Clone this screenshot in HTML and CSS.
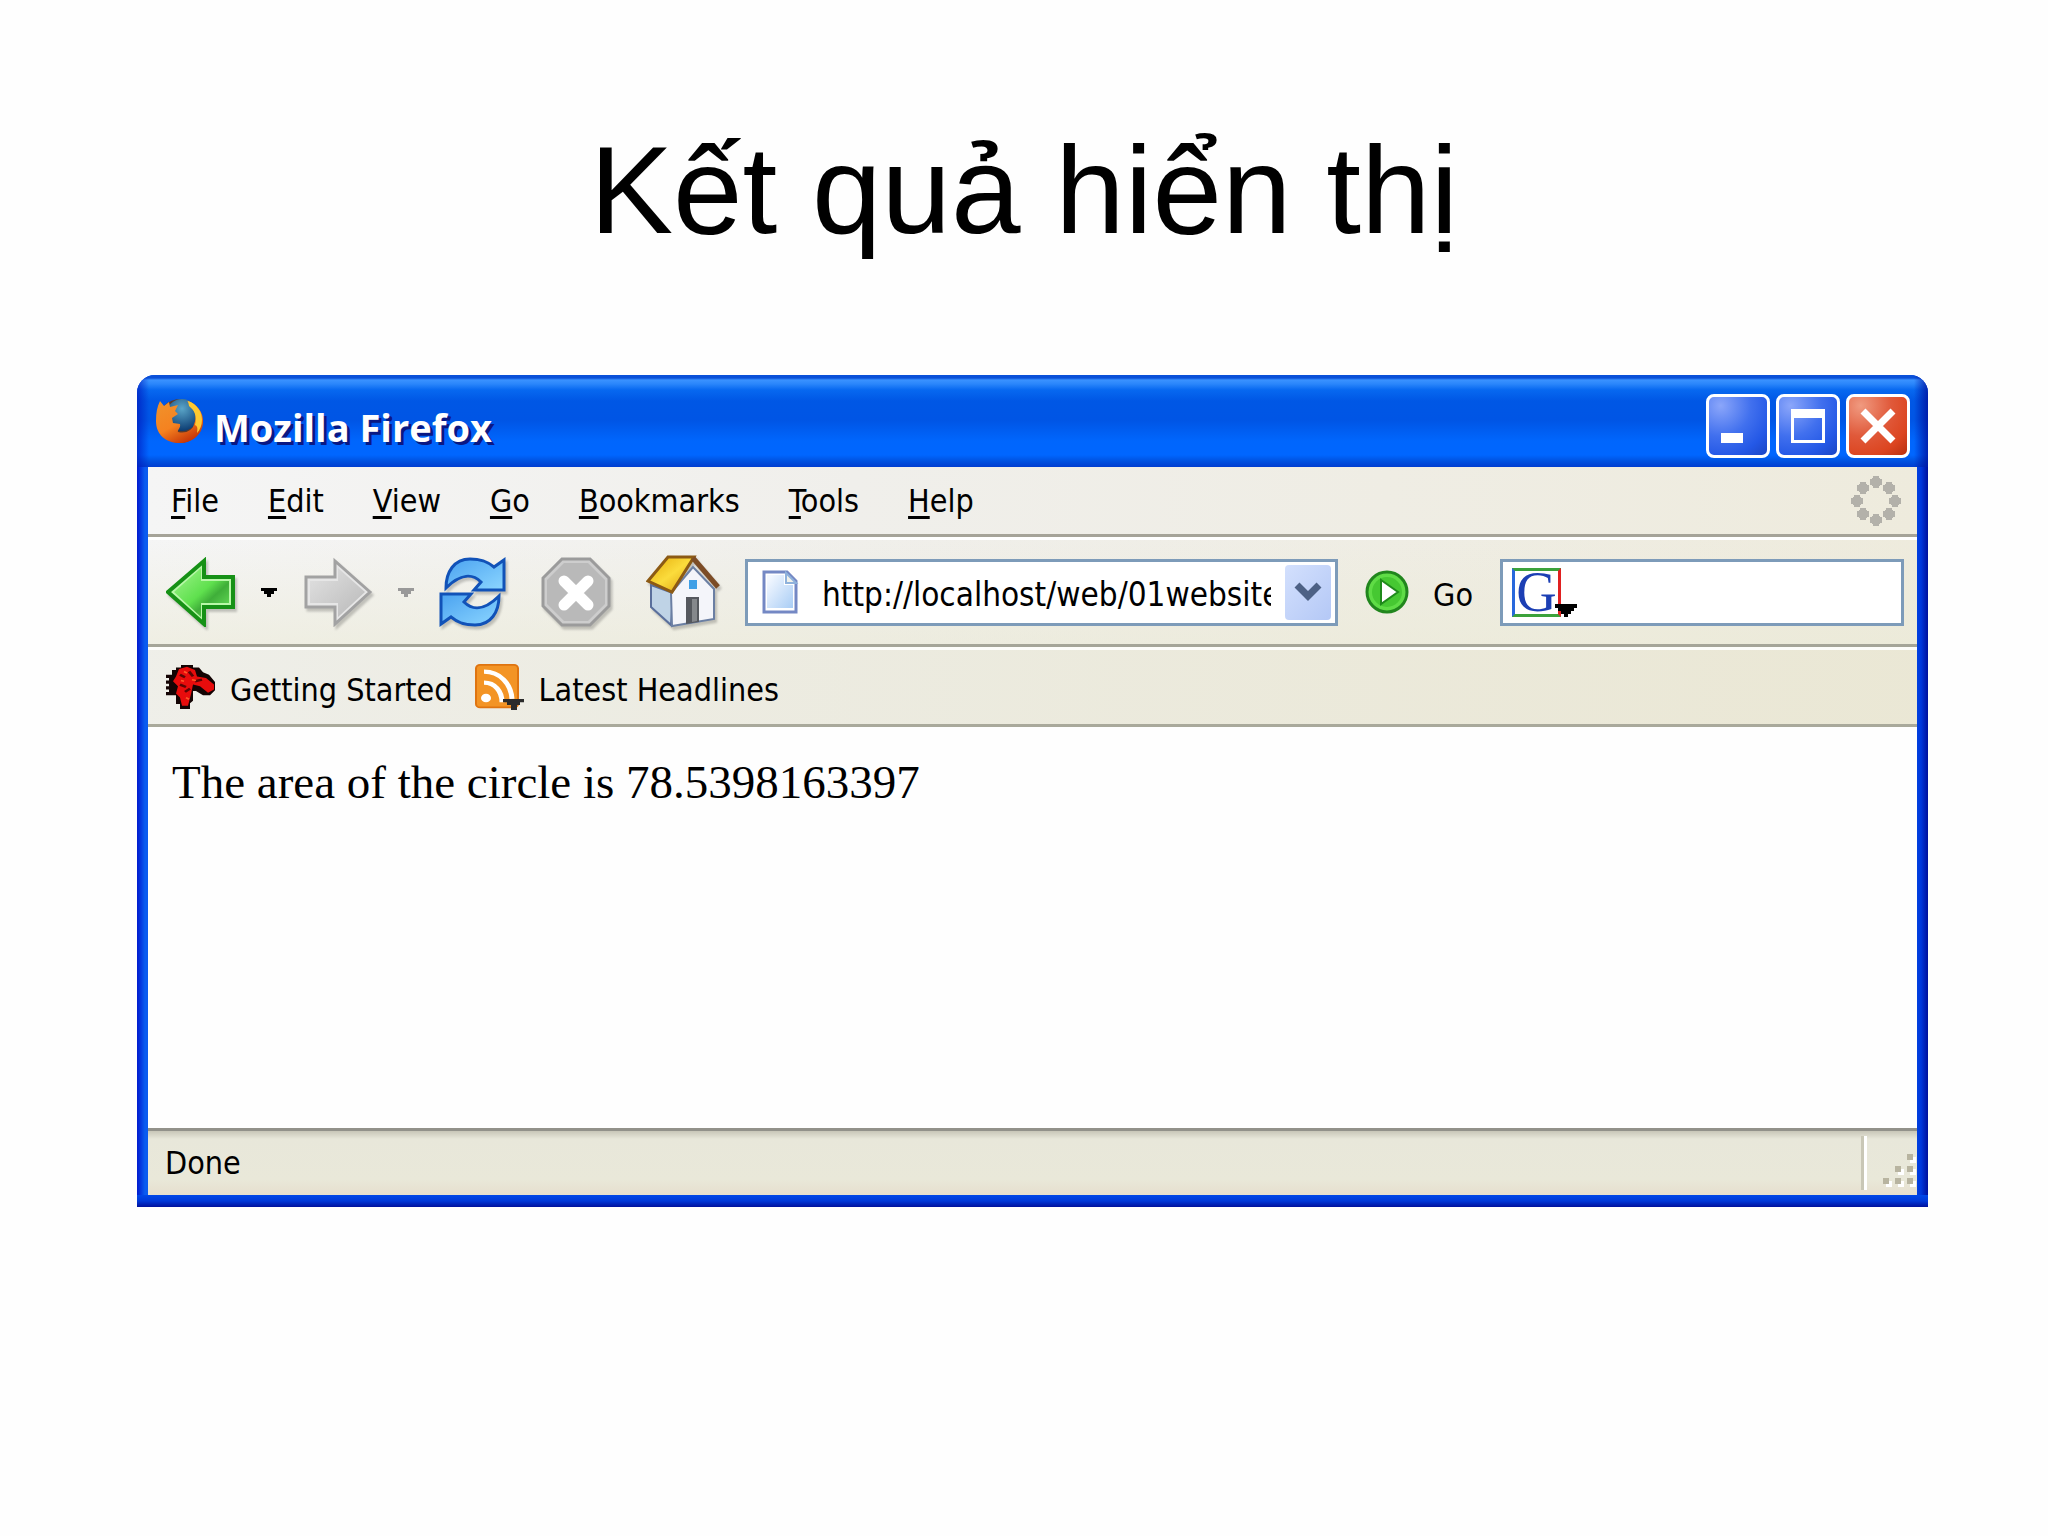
FILE: index.html
```html
<!DOCTYPE html>
<html lang="vi">
<head>
    <meta charset="UTF-8">
    <meta name="viewport" content="width=device-width, initial-scale=1.0">
    <title>Kết quả hiển thị</title>
    <link rel="stylesheet" href="styles.css">
</head>
<body>
    <h1>Kết quả hiển thị</h1>

    <div class="window">
        <div class="title-bar">
            <svg class="logo" width="49" height="46" viewBox="0 0 49 46">
                <defs>
                    <linearGradient id="fox" x1="0" y1="0" x2="0.6" y2="1">
                        <stop offset="0" stop-color="#f0932c"/>
                        <stop offset="0.6" stop-color="#f58220"/>
                        <stop offset="1" stop-color="#c83808"/>
                    </linearGradient>
                    <radialGradient id="globe" cx="0.5" cy="0.3" r="0.7">
                        <stop offset="0" stop-color="#5aa5c8"/>
                        <stop offset="1" stop-color="#0c3c72"/>
                    </radialGradient>
                </defs>
                <circle cx="25" cy="23" r="22" fill="#5b3a2a"/>
                <circle cx="27" cy="17" r="16" fill="url(#globe)"/>
                <path d="M5 3l4 5 5-4 1 5 8-2-3 6 3 3-6 4 1 5 7 1c1 4-3 6-2 8 8 2 15-2 16-8 3-6 1-13-2-17l-5-6c9 2 17 11 16 22-1 12-11 20-23 20C11 45 1 37 1 23 1 15 2 9 5 3z" fill="url(#fox)"/>
                <path d="M33 3c9 3 14 11 14 19 0 5-2 10-5 13 1-6 0-7-2-8 2-9 0-14-6-19z" fill="#ffc930"/>
            </svg>
            <span class="title">Mozilla Firefox</span>
            <button class="win-button" aria-label="Minimize">
                <svg width="58" height="58" viewBox="0 0 58 58"><path d="M12 36h22v10H12z" fill="#fff"/></svg>
            </button>
            <button class="win-button" aria-label="Maximize">
                <svg width="58" height="58" viewBox="0 0 58 58"><path d="M12 12h34v34H12zM15 21v22h28V21z" fill="#fff" fill-rule="evenodd"/></svg>
            </button>
            <button class="win-button close" aria-label="Close">
                <svg width="58" height="58" viewBox="0 0 58 58"><path d="M14 14l30 30M44 14L14 44" stroke="#fff" stroke-width="7"/></svg>
            </button>
        </div>

        <div class="frame">
            <nav class="menu-bar">
                <a href="#"><u>F</u>ile</a>
                <a href="#"><u>E</u>dit</a>
                <a href="#"><u>V</u>iew</a>
                <a href="#"><u>G</u>o</a>
                <a href="#"><u>B</u>ookmarks</a>
                <a href="#"><u>T</u>ools</a>
                <a href="#"><u>H</u>elp</a>
                <svg class="throbber" width="50" height="50" viewBox="0 0 50 50">
                    <path d="M25 0v12M19 6h12M38 6v12M32 12h12M44 19v12M38 25h12M38 32v12M32 38h12M25 38v12M19 44h12M12 32v12M6 38h12M6 19v12M0 25h12M12 6v12M6 12h12" stroke="#b3b1aa" stroke-width="6"/>
                    <path d="M21 2h8v8h-8zM34 8h8v8h-8zM40 21h8v8h-8zM34 34h8v8h-8zM21 40h8v8h-8zM8 34h8v8H8zM2 21h8v8H2zM8 8h8v8H8z" fill="#b3b1aa"/>
                </svg>
            </nav>

            <div class="toolbar">
                <button class="tool" aria-label="Back">
                    <svg width="70" height="70" viewBox="0 0 70 70">
                        <defs>
                            <linearGradient id="green" x1="0" y1="0" x2="1" y2="1">
                                <stop offset="0" stop-color="#a0f58c"/>
                                <stop offset="0.5" stop-color="#5fe04e"/>
                                <stop offset="0.65" stop-color="#3fae39"/>
                                <stop offset="1" stop-color="#6fe860"/>
                            </linearGradient>
                        </defs>
                        <path d="M2 35L38 4v16h29v30H38v17z" fill="#b8f8a8" stroke="#169116" stroke-width="4"/>
                        <path d="M8 35l27-24v13h28v22H35v14z" fill="url(#green)"/>
                    </svg>
                </button>
                <button class="drop" aria-label="Back history">
                    <svg width="16" height="9" viewBox="0 0 16 9"><path d="M0 0h16v3h-3v3h-3v3H6V6H3V3H0z" fill="#000"/></svg>
                </button>
                <button class="tool" aria-label="Forward">
                    <svg width="70" height="70" viewBox="0 0 70 70">
                        <defs>
                            <linearGradient id="grey" x1="0" y1="0" x2="1" y2="1">
                                <stop offset="0" stop-color="#e2e2e2"/>
                                <stop offset="1" stop-color="#b9b9b9"/>
                            </linearGradient>
                        </defs>
                        <path d="M67 35L32 4v16H3v30h29v17z" fill="#e6e6e6" stroke="#a2a2a2" stroke-width="3"/>
                        <path d="M62 35L35 11v13H7v22h28v14z" fill="url(#grey)"/>
                    </svg>
                </button>
                <button class="drop" aria-label="Forward history">
                    <svg width="16" height="9" viewBox="0 0 16 9"><path d="M0 0h16v3h-3v3h-3v3H6V6H3V3H0z" fill="#999"/></svg>
                </button>
                <button class="tool reload" aria-label="Reload">
                    <svg width="70" height="70" viewBox="0 0 70 70">
                        <defs>
                            <linearGradient id="blue" x1="0" y1="0" x2="1" y2="1">
                                <stop offset="0" stop-color="#4aa2f0"/>
                                <stop offset="1" stop-color="#8cd6ff"/>
                            </linearGradient>
                        </defs>
                        <path d="M8 31C8 15 16 2 32 2c12 0 18 3 24 8l10-7v30H36l7-8c-8-8-20-9-35 6z" fill="url(#blue)" stroke="#1152b8" stroke-width="3"/>
                        <path d="M61 39c0 16-8 29-24 29-12 0-18-3-24-8L3 67V37h30l-7 8c8 8 20 9 35-6z" fill="url(#blue)" stroke="#1152b8" stroke-width="3"/>
                    </svg>
                </button>
                <button class="tool stop" aria-label="Stop">
                    <svg width="70" height="70" viewBox="0 0 70 70">
                        <path d="M21 2h28l19 19v28L49 68H21L2 49V21z" fill="#cdcdcd" stroke="#9b9b9b" stroke-width="3"/>
                        <path d="M23 6h24l17 17v24L47 64H23L6 47V23z" fill="#b9b9b9"/>
                        <path d="M23 24l24 24M47 24L23 48" stroke="#fff" stroke-width="11" stroke-linecap="round"/>
                    </svg>
                </button>
                <button class="tool home" aria-label="Home">
                    <svg width="74" height="74" viewBox="0 0 74 74">
                        <defs>
                            <linearGradient id="roof" x1="0" y1="0" x2="1" y2="1">
                                <stop offset="0" stop-color="#e3a908"/>
                                <stop offset="0.5" stop-color="#fbdc3c"/>
                                <stop offset="1" stop-color="#d99a0a"/>
                            </linearGradient>
                        </defs>
                        <path d="M5 30v22l20 18 2-32z" fill="#bfd3e6" stroke="#5a6f9c" stroke-width="2"/>
                        <path d="M25 38L47 12l21 22v30l-42 7z" fill="#f4f5fa" stroke="#6b7fa3" stroke-width="2"/>
                        <path d="M2 26L22 2h26L26 37z" fill="url(#roof)" stroke="#8c5a14" stroke-width="3"/>
                        <path d="M47 3l25 29" stroke="#7c4c26" stroke-width="5"/>
                        <path d="M43 25h8v9h-8z" fill="#3f9fe6"/>
                        <path d="M40 42h13v25l-13 2z" fill="#55585e"/>
                        <path d="M46 44h5v22l-5 1z" fill="#85888c"/>
                    </svg>
                </button>
                <div class="field address">
                    <svg width="37" height="45" viewBox="0 0 37 45">
                        <defs>
                            <linearGradient id="sheet" x1="0" y1="0" x2="1" y2="1">
                                <stop offset="0.1" stop-color="#f2f7ff"/>
                                <stop offset="1" stop-color="#a9cdf5"/>
                            </linearGradient>
                        </defs>
                        <path d="M2 2h23l9 9v31H2z" fill="#fff" stroke="#7488c4" stroke-width="3"/>
                        <path d="M5 5h17v10h9v23H5z" fill="url(#sheet)"/>
                        <path d="M24 3v10h10z" fill="#f2f2ea" stroke="#8fb2dc" stroke-width="2"/>
                    </svg>
                    <input type="text" aria-label="Address" value="http://localhost/web/01website/">
                    <button class="address-drop" aria-label="Show addresses">
                        <svg width="28" height="20" viewBox="0 0 28 20"><path d="M3 3l11 11L25 3" fill="none" stroke="#4d6185" stroke-width="7"/></svg>
                    </button>
                </div>
                <button class="go">
                    <svg width="44" height="44" viewBox="0 0 44 44">
                        <circle cx="22" cy="22" r="20" fill="#5fdc46" stroke="#21861d" stroke-width="3"/>
                        <circle cx="22" cy="22" r="15" fill="#46c832"/>
                        <path d="M16 10l17 12-17 12z" fill="#fff" stroke="#1f8a1b" stroke-width="2"/>
                    </svg>
                    <span>Go</span>
                </button>
                <div class="field search">
                    <button class="engine" aria-label="Search engine">
                        <span>G</span>
                        <svg width="22" height="13" viewBox="0 0 22 13"><path d="M0 0h22v4h-3v3h-3v3h-3v3H9v-3H6V7H3V4H0z" fill="#000"/></svg>
                    </button>
                    <input type="text" aria-label="Search">
                </div>
            </div>

            <div class="bookmarks">
                <a href="#">
                    <svg width="50" height="44" viewBox="0 0 50 54" preserveAspectRatio="none">
                        <path d="M10 3h5V0h12v3h6l4 6 6 3 6 9v10l-5 6h-7l-7-5h-3v12l-3 3v7H14v-6h-4V37H0v-4h3v-3H0v-4h3v-3H0v-4h3v-3H0v-4h6V6h4z" fill="#140404"/>
                        <path d="M13 5l8-3 8 4 2 8 9 2 8 8v6l-6 4-8-8-7-2-2 12-3 14h-6l-2-10-4-5 2-9-5-6 3-6z" fill="#e80c0c"/>
                        <path d="M14 12l5 3M23 8l4 6M14 24l6 3M29 20l7-2M19 33l5-4" stroke="#5c0505" stroke-width="3"/>
                        <path d="M18 8l3 2M15 19l3 1M26 18l4 1M20 40l3 2" stroke="#ff5a28" stroke-width="2"/>
                    </svg>
                    <span>Getting Started</span>
                </a>
                <a href="#">
                    <svg width="50" height="46" viewBox="0 0 50 54" preserveAspectRatio="none">
                        <rect x="1" y="1" width="42" height="50" rx="4" fill="#f39425" stroke="#df7410" stroke-width="2"/>
                        <circle cx="11" cy="40" r="5" fill="#fff"/>
                        <path d="M9 22c11 0 18 10 18 23M9 9c16 0 27 14 28 32" fill="none" stroke="#fff" stroke-width="5"/>
                        <path d="M28 41h21v4h-4v3h-3v6h-6v-6h-4v-3h-4z" fill="#2b2b2b"/>
                    </svg>
                    <span>Latest Headlines</span>
                </a>
            </div>

            <main class="page">The area of the circle is 78.5398163397</main>

            <div class="status-bar">
                <span>Done</span>
                <svg class="grip" width="34" height="34" viewBox="0 0 34 34">
                    <path d="M27 3h6v6h-6zM15 15h6v6h-6zM27 15h6v6h-6zM3 27h6v6H3zM15 27h6v6h-6zM27 27h6v6h-6z" fill="#fff"/>
                    <path d="M24 0h6v6h-6zM12 12h6v6h-6zM24 12h6v6h-6zM0 24h6v6H0zM12 24h6v6h-6zM24 24h6v6h-6z" fill="#b8b4a0"/>
                </svg>
            </div>
        </div>
    </div>
</body>
</html>
```

FILE: styles.css
```css
* {
    box-sizing: border-box;
}

body {
    margin: 0;
    background-color: #fefefe;
    color: #000;
    font-family: "DejaVu Sans Condensed", "DejaVu Sans", sans-serif;
    font-size: 32px;
}

h1 {
    margin: 0;
    padding: 118px 0 113px;
    font-family: "Liberation Sans", Arial, sans-serif;
    font-size: 125px;
    font-weight: normal;
    line-height: 144px;
    text-align: center;
}

button {
    display: flex;
    align-items: center;
    justify-content: center;
    padding: 0;
    border: none;
    background: none;
    color: inherit;
    font: inherit;
    cursor: pointer;
}

svg {
    display: block;
    flex: none;
}

a {
    color: inherit;
    text-decoration: none;
}

.window {
    margin: 0 120px 0 137px;
    padding-bottom: 12px;
    border-radius: 18px 18px 0 0;
    background:
        linear-gradient(to bottom, #0048e8, #0038d8 50%, #00109c) bottom / 100% 12px no-repeat,
        linear-gradient(to right, #0019cf, #0a5cf0 8px, #0b5af0 12px, #0040e0 calc(100% - 12px), #0038dc calc(100% - 7px), #00109c);
    overflow: hidden;
}

.title-bar {
    display: flex;
    align-items: center;
    gap: 6px;
    height: 92px;
    padding: 0 18px;
    background:
        linear-gradient(to right, rgba(0, 25, 190, 0.7), transparent 12px, transparent calc(100% - 14px), rgba(0, 16, 156, 0.8)),
        linear-gradient(to bottom, #0a50d8 0, #0a50d8 3px, #3a92ff 5px, #2a86fb 9px, #0768f0 15px, #0057e5 26px, #0055e5 45px, #0066fd 66px, #0066ff 80px, #0052e0 86px, #003dd0 92px);
}

.logo {
    margin-right: 4px;
}

.title {
    flex: 1;
    padding-top: 12px;
    color: #fff;
    font-family: "Open Sans", sans-serif;
    font-size: 38px;
    font-weight: bold;
    text-shadow: 3px 3px 0 #0a1883;
}

.win-button {
    width: 64px;
    height: 64px;
    margin-top: 10px;
    border: 3px solid #fff;
    border-radius: 8px;
    background: radial-gradient(circle at 20% 15%, #8ba6fa, #4170ee 45%, #2458e6 75%, #1b45c4);
}

.close {
    background: radial-gradient(circle at 20% 15%, #f09a80, #e0593a 45%, #dc4520 75%, #b83010);
}

.frame {
    margin: 0 11px;
    background: linear-gradient(to right, #f5f5f5, #f0efeb 40%, #eeebdd);
}

.menu-bar {
    display: flex;
    align-items: center;
    gap: 49px;
    height: 70px;
    padding: 0 16px 0 23px;
    border-bottom: 3px solid #a5a398;
}

.menu-bar u {
    text-decoration-thickness: 3px;
    text-underline-offset: 4px;
}

.throbber {
    margin-left: auto;
}

.toolbar {
    display: flex;
    align-items: center;
    height: 110px;
    padding: 0 13px 0 18px;
    border-top: 3px solid #fff;
    border-bottom: 3px solid #a5a598;
    background: linear-gradient(to bottom, transparent, rgba(235, 234, 215, 0.6));
}

.tool svg {
    filter: drop-shadow(2px 3px 1px rgba(0, 0, 0, 0.2));
}

.drop {
    width: 16px;
    margin: 0 26px 0 25px;
}

.reload {
    margin: 0 33px 0 -2px;
}

.stop {
    margin-right: 35px;
}

.field {
    display: flex;
    align-items: center;
    height: 67px;
    border: 3px solid #7d9bb9;
    background-color: #fff;
}

.field input {
    flex: 1;
    min-width: 0;
    padding: 5px 0 0;
    border: none;
    outline: none;
    background: none;
    color: #000;
    font: inherit;
    font-size: 33px;
}

.address {
    flex: 1;
    min-width: 0;
    gap: 14px;
    margin-left: 25px;
    padding: 0 4px 0 14px;
}

.address input {
    margin-left: 9px;
}

.address-drop {
    width: 46px;
    height: 55px;
    border-radius: 4px;
    background: linear-gradient(to bottom right, #d3e0fd, #b4c8f6);
}

.go {
    gap: 24px;
    margin: 0 27px;
}

.go span {
    padding-top: 5px;
}

.search {
    width: 404px;
    padding-left: 9px;
}

/* the arrow hangs over the corner of the logo */
.engine {
    position: relative;
    width: 66px;
    height: 49px;
    justify-content: flex-start;
}

.engine span {
    width: 49px;
    height: 49px;
    border: 3px solid;
    border-color: #3ba23b #e02020 #3ba23b #2868dc;
    color: #1c3fb4;
    font-family: "Liberation Serif", serif;
    font-size: 56px;
    line-height: 43px;
    text-align: center;
}

.engine svg {
    position: absolute;
    right: 1px;
    bottom: 0;
}

.bookmarks {
    display: flex;
    align-items: center;
    gap: 22px;
    height: 80px;
    padding: 0 18px;
    border-top: 3px solid #fdfdfa;
    border-bottom: 3px solid #a9a99b;
    background: linear-gradient(to right, rgba(236, 236, 228, 0.7), rgba(234, 231, 212, 0.9));
}

.bookmarks a {
    display: flex;
    align-items: center;
    gap: 14px;
}

.bookmarks span {
    padding-top: 5px;
}

.page {
    min-height: 401px;
    padding: 28px 24px;
    background-color: #fefefe;
    font-family: "Liberation Serif", "Times New Roman", serif;
    font-size: 47px;
    line-height: 54px;
}

.status-bar {
    display: flex;
    align-items: center;
    height: 67px;
    padding-left: 17px;
    border-top: 3px solid #92918a;
    background: linear-gradient(to bottom, #c8c6b8, #e8e7da 8px, #e9e8d9 48px, #e6dfce);
}

.grip {
    box-sizing: content-box;
    margin-left: auto;
    padding: 18px 0 2px 16px;
    border-left: 3px solid #fff;
    box-shadow: -3px 0 0 #c9c7b6;
}
```
